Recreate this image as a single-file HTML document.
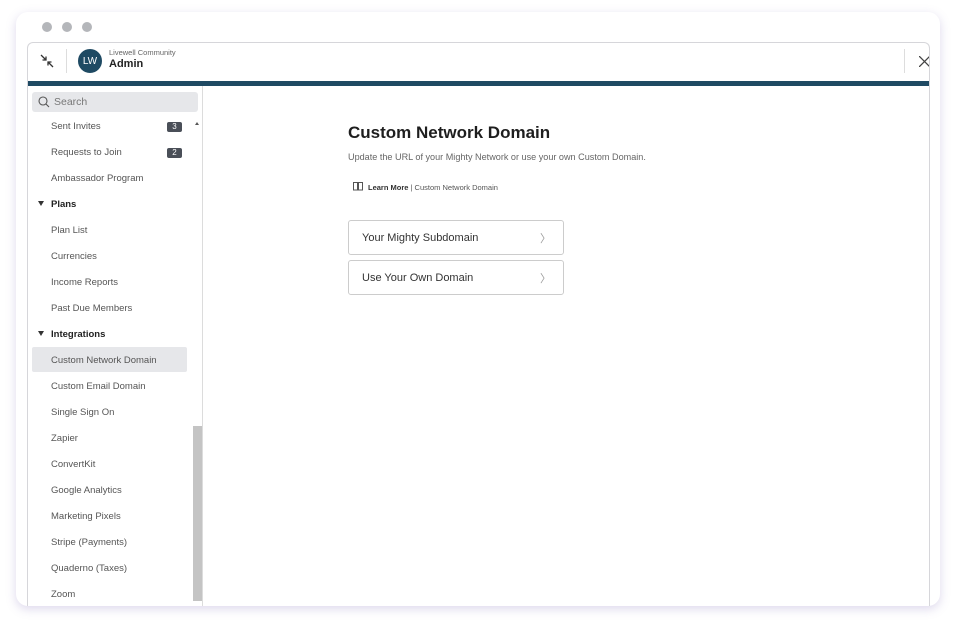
<!DOCTYPE html>
<html><head><style>
*{margin:0;padding:0;box-sizing:border-box}
body{width:958px;height:628px;background:#fff;font-family:"Liberation Sans",sans-serif;position:relative;overflow:hidden}
.card{position:absolute;left:16px;top:12px;width:924px;height:594px;border-radius:12px;background:#fff;box-shadow:0 3px 10px rgba(120,100,180,.25)}
.dot{position:absolute;top:22px;width:10px;height:10px;border-radius:50%;background:#b4b6ba}
.win{position:absolute;left:27px;top:42px;width:903px;height:564px;border:1px solid #d6d6da;border-bottom:none;border-radius:6px 6px 0 0;overflow:hidden}
.bar{position:absolute;left:0;top:38px;width:100%;height:5px;background:#1f4a63}
.side{position:absolute;left:0;top:43px;width:175px;height:530px;border-right:1px solid #dcdcdc}
.it{position:absolute;left:23px;font-size:9.5px;color:#555}
.hd{position:absolute;left:23px;font-size:9.5px;color:#222;font-weight:bold}
.tri{position:absolute;left:10px;width:0;height:0;border-left:3.5px solid transparent;border-right:3.5px solid transparent;border-top:5px solid #333}
.badge{position:absolute;left:139px;width:15px;height:10px;background:#4a4f58;color:#fff;font-size:8px;text-align:center;line-height:10px;border-radius:2px}
.btn{position:absolute;left:348px;width:216px;height:35px;border:1px solid #ccc;border-radius:3px;font-size:11px;color:#333;padding:11px 13px}
.btn span{position:absolute;right:12px;top:9px;color:#999;font-size:11px}
</style></head><body>
<div class="card"></div>
<div class="dot" style="left:42px"></div><div class="dot" style="left:62px"></div><div class="dot" style="left:82px"></div>
<div class="win">
 <svg style="position:absolute;left:12px;top:11px" width="14" height="14" viewBox="0 0 14 14" stroke="#333" stroke-width="1.3" fill="none"><path d="M1 1L6 6M6 2.5V6H2.5M13 13L8 8M8 11.5V8H11.5"/></svg>
 <div style="position:absolute;left:38px;top:6px;width:1px;height:24px;background:#ddd"></div>
 <div style="position:absolute;left:50px;top:6px;width:24px;height:24px;border-radius:50%;background:#1f4a63;color:#fff;font-size:10px;text-align:center;line-height:24px;border:1px solid #1f4a63">LW</div>
 <div style="position:absolute;left:81px;top:5px;font-size:7.5px;color:#666">Livewell Community</div>
 <div style="position:absolute;left:81px;top:15px;font-size:11px;font-weight:bold;color:#222">Admin</div>
 <div style="position:absolute;left:876px;top:6px;width:1px;height:24px;background:#ddd"></div>
 <svg style="position:absolute;left:891px;top:13px" width="11" height="11" viewBox="0 0 11 11" stroke="#444" stroke-width="1.3"><path d="M0 0L11 11M11 0L0 11"/></svg>
 <div class="bar"></div>
 <div class="side">
  <div style="position:absolute;left:4px;top:6px;width:166px;height:20px;background:#e6e7ea;border-radius:3px;font-size:10.5px;color:#777;padding:4px 0 0 22px">Search</div>
  <svg style="position:absolute;left:10px;top:10px" width="12" height="12" viewBox="0 0 12 12" fill="none" stroke="#555" stroke-width="1.1"><circle cx="5" cy="5" r="4"/><path d="M8 8L11 11"/></svg>
  <div style="position:absolute;left:165px;top:340px;width:9px;height:175px;background:#c4c4c4"></div>
  <div style="position:absolute;left:167px;top:36px;width:0;height:0;border-left:2.5px solid transparent;border-right:2.5px solid transparent;border-bottom:3px solid #555"></div>
  <div style="position:absolute;left:4px;top:261px;width:155px;height:25px;background:#e6e7ea;border-radius:2px"></div>
  <div class="it" style="top:35px">Sent Invites</div><div class="badge" style="top:36px">3</div>
  <div class="it" style="top:61px">Requests to Join</div><div class="badge" style="top:62px">2</div>
  <div class="it" style="top:87px">Ambassador Program</div>
  <div class="tri" style="top:115px"></div><div class="hd" style="top:113px">Plans</div>
  <div class="it" style="top:139px">Plan List</div>
  <div class="it" style="top:165px">Currencies</div>
  <div class="it" style="top:191px">Income Reports</div>
  <div class="it" style="top:217px">Past Due Members</div>
  <div class="tri" style="top:245px"></div><div class="hd" style="top:243px">Integrations</div>
  <div class="it" style="top:269px">Custom Network Domain</div>
  <div class="it" style="top:295px">Custom Email Domain</div>
  <div class="it" style="top:321px">Single Sign On</div>
  <div class="it" style="top:347px">Zapier</div>
  <div class="it" style="top:373px">ConvertKit</div>
  <div class="it" style="top:399px">Google Analytics</div>
  <div class="it" style="top:425px">Marketing Pixels</div>
  <div class="it" style="top:451px">Stripe (Payments)</div>
  <div class="it" style="top:477px">Quaderno (Taxes)</div>
  <div class="it" style="top:503px">Zoom</div>
 </div>
</div>
<div style="position:absolute;left:348px;top:123px;font-size:17px;font-weight:bold;color:#1e1e1e">Custom Network Domain</div>
<div style="position:absolute;left:348px;top:152px;font-size:9.1px;color:#666">Update the URL of your Mighty Network or use your own Custom Domain.</div>
<svg style="position:absolute;left:353px;top:182px" width="10" height="9" viewBox="0 0 10 9" fill="none" stroke="#555" stroke-width="1"><path d="M.5 .5H4.5V8H.5ZM5.5 .5H9.5V8H5.5Z"/></svg>
<div style="position:absolute;left:368px;top:183px;font-size:7.5px;color:#555"><b style="color:#333">Learn More</b> | Custom Network Domain</div>
<div class="btn" style="top:220px">Your Mighty Subdomain<span>〉</span></div>
<div class="btn" style="top:260px">Use Your Own Domain<span>〉</span></div>
</body></html>
